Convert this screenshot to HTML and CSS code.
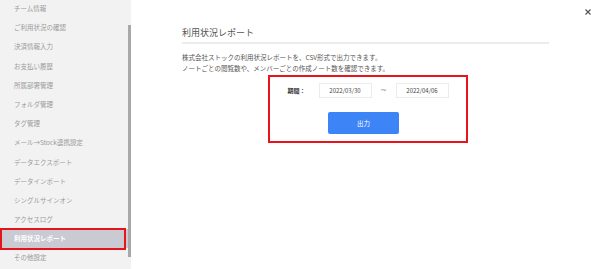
FILE: index.html
```html
<!DOCTYPE html>
<html lang="ja">

<head>
    <meta charset="UTF-8">
    <meta name="viewport" content="width=device-width, initial-scale=1.0">
    <title>利用状況レポート</title>
    <link rel="stylesheet" href="styles.css">
</head>

<body>
    <div class="page">
        <aside class="sidebar">
            <ul class="menu">
                <li>チーム情報</li>
                <li>ご利用状況の確認</li>
                <li>決済情報入力</li>
                <li>お支払い履歴</li>
                <li>所属部署管理</li>
                <li>フォルダ管理</li>
                <li>タグ管理</li>
                <li>メール→Stock連携設定</li>
                <li>データエクスポート</li>
                <li>データインポート</li>
                <li>シングルサインオン</li>
                <li>アクセスログ</li>
                <li class="active">利用状況レポート</li>
                <li>その他設定</li>
            </ul>
            <div class="scrollbar">
                <div class="thumb"></div>
            </div>
        </aside>

        <main class="panel">
            <button class="close" aria-label="閉じる">
                <svg width="6" height="6" viewBox="0 0 6 6">
                    <path d="M0.5 0.5 L5.5 5.5 M5.5 0.5 L0.5 5.5" stroke="#555" stroke-width="1.2" />
                </svg>
            </button>

            <div class="content">
                <h1 class="title">利用状況レポート</h1>
                <p class="desc">
                    株式会社ストックの利用状況レポートを、CSV形式で出力できます。<br>
                    ノートごとの閲覧数や、メンバーごとの作成ノート数を確認できます。
                </p>

                <div class="export-box">
                    <div class="period">
                        <span class="label">期間：</span>
                        <span class="date">2022/03/30</span>
                        <span class="tilde">~</span>
                        <span class="date">2022/04/06</span>
                    </div>
                    <button class="export-btn">出力</button>
                </div>
            </div>
        </main>
    </div>
</body>

</html>
```

FILE: styles.css
```css
html {
    font-family: "Noto Sans CJK JP", "Noto Sans", sans-serif;
}

body {
    margin: 0;
    background: #fff;
}

.page {
    display: flex;
    height: 269px;
    overflow: hidden;
}

/* left settings menu */
.sidebar {
    width: 131px;
    background: #f2f2f2;
    display: flex;
    flex-shrink: 0;
}

.menu {
    list-style: none;
    margin: -1px 0 0;
    padding: 0;
    width: 128px;

    li {
        height: 19.2px;
        line-height: 19.2px;
        padding-left: 14px;
        font-size: 6.5px;
        color: #9a9a9a;
        white-space: nowrap;
    }

    li.active {
        position: relative;
        background: #c9cad2;
        color: #fff;
        font-weight: bold;
    }

    li.active::after {
        content: "";
        position: absolute;
        left: 0;
        right: 2px;
        top: -1.5px;
        bottom: -1.5px;
        border: 2px solid #e3141b;
    }
}

.scrollbar {
    width: 3px;
    padding-top: 25px;

    .thumb {
        height: 232px;
        background: #a8a8a8;
    }
}

/* right panel */
.panel {
    flex: 1;
    position: relative;
}

.close {
    position: absolute;
    top: 9px;
    right: 9px;
    width: 6px;
    height: 6px;
    padding: 0;
    border: 0;
    background: none;
    display: flex;
}

.content {
    margin-left: 51px;
    width: 367px;
    padding-top: 26px;
}

.title {
    margin: 0;
    font-size: 9px;
    font-weight: normal;
    line-height: 14px;
    color: #555;
    padding-bottom: 2px;
    border-bottom: 2px solid #ececec;
}

.desc {
    margin: 8px 0 0;
    font-size: 6.5px;
    line-height: 11px;
    color: #555;
}

.export-box {
    box-sizing: border-box;
    width: 200px;
    height: 68px;
    margin: 1px 0 0 86px;
    padding-top: 6px;
    border: 2px solid #e8141c;
}

.period {
    display: flex;
    align-items: center;
    justify-content: center;
    height: 15px;

    .label {
        font-size: 6px;
        font-weight: bold;
        color: #333;
        margin-right: 13px;
    }

    .date {
        box-sizing: border-box;
        width: 53px;
        height: 15px;
        border: 1px solid #ececec;
        display: flex;
        align-items: center;
        justify-content: center;
        font-size: 6px;
        color: #444;
    }

    .tilde {
        width: 24px;
        text-align: center;
        font-family: "DejaVu Sans", sans-serif;
        font-size: 8px;
        color: #999;
    }
}

.export-btn {
    display: block;
    width: 71px;
    height: 22px;
    margin: 14px 0 0 58px;
    border: none;
    border-radius: 2px;
    background: #3d84f6;
    color: #fff;
    font-family: inherit;
    font-size: 6.5px;
}
```
